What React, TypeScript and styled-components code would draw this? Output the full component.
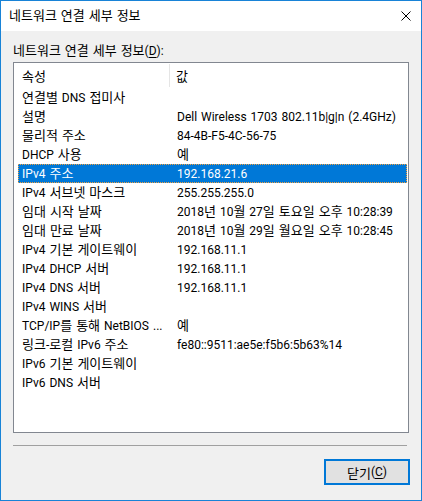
import React from "react";
import styled, { createGlobalStyle } from "styled-components";

const Global = createGlobalStyle`
  html, body { margin: 0; padding: 0; background: #ffffff; }
  * { box-sizing: border-box; }
`;

const FONT = `Roboto, "Noto Sans CJK KR", sans-serif`;

const Window = styled.div`
  width: 422px;
  height: 501px;
  border: 1px solid #1883d7;
  display: flex;
  flex-direction: column;
  font-family: ${FONT};
  font-size: 12px;
  word-spacing: 1px;
  color: #000;
  background: #f0f0f0;
`;

const Hangul = styled.span`
  font-family: "Noto Sans CJK KR", sans-serif;
  font-size: 13px;
  line-height: 1;
`;

const TitleBar = styled.div`
  height: 30px;
  flex: none;
  background: #ffffff;
  display: flex;
  align-items: center;
  justify-content: space-between;
  padding: 0 10px 0 8px;
`;

const Title = styled.span`
  line-height: 16px;
  color: #000;
`;

const CloseIcon = styled.svg`
  width: 10px;
  height: 10px;
  display: block;
`;

const Body = styled.div`
  flex: 1;
  display: flex;
  flex-direction: column;
  padding: 12px 11px 0 12px;
`;

const Label = styled.div`
  height: 19px;
  line-height: 16px;
`;

const Underline = styled.span`
  text-decoration: underline;
  text-underline-offset: 2px;
`;

const ListBox = styled.div`
  width: 396px;
  height: 371px;
  border: 1px solid #828790;
  background: #ffffff;
  display: flex;
  flex-direction: column;
`;

const Header = styled.div`
  height: 25px;
  display: grid;
  grid-template-columns: 156px 1fr;
  flex: none;
`;

const HeaderCell = styled.div<{ $first?: boolean }>`
  display: flex;
  align-items: center;
  padding-left: ${(p) => (p.$first ? "8px" : "6px")};
  border-right: ${(p) => (p.$first ? "1px solid #e5e5e5" : "none")};
  margin: 1px 0 1px;
`;

const Rows = styled.div`
  display: flex;
  flex-direction: column;
  padding: 0 1px 0 4px;
`;

const Row = styled.div<{ $selected?: boolean }>`
  height: 19px;
  display: grid;
  grid-template-columns: 152px 1fr;
  align-items: center;
  background: ${(p) => (p.$selected ? "#0078d7" : "transparent")};
  color: ${(p) => (p.$selected ? "#ffffff" : "#000000")};
  outline: ${(p) => (p.$selected ? "1px dotted #f0a040" : "none")};
  outline-offset: -1px;
`;

const Cell = styled.div<{ $value?: boolean }>`
  padding-left: ${(p) => (p.$value ? "7px" : "4px")};
  white-space: nowrap;
  line-height: 16px;
`;

const Separator = styled.div`
  margin-top: 12px;
  width: 394px;
  height: 1px;
  background: #a0a0a0;
`;

const Footer = styled.div`
  display: flex;
  justify-content: flex-end;
  padding-top: 13px;
`;

const Button = styled.button`
  width: 86px;
  height: 26px;
  border: 2px solid #0078d7;
  background: #e1e1e1;
  font-family: ${FONT};
  font-size: 12px;
  color: #000;
  padding: 0;
  display: flex;
  align-items: center;
  justify-content: center;
`;

const T = ({ s }: { s: string }) => (
  <>
    {s.split(/([\uAC00-\uD7A3\u3130-\u318F]+)/).map((part, i) =>
      i % 2 === 1 ? <Hangul key={i}>{part}</Hangul> : <React.Fragment key={i}>{part}</React.Fragment>
    )}
  </>
);

const rows: [string, string][] = [
  ["연결별 DNS 접미사", ""],
  ["설명", "Dell Wireless 1703 802.11b|g|n (2.4GHz)"],
  ["물리적 주소", "84-4B-F5-4C-56-75"],
  ["DHCP 사용", "예"],
  ["IPv4 주소", "192.168.21.6"],
  ["IPv4 서브넷 마스크", "255.255.255.0"],
  ["임대 시작 날짜", "2018년 10월 27일 토요일 오후 10:28:39"],
  ["임대 만료 날짜", "2018년 10월 29일 월요일 오후 10:28:45"],
  ["IPv4 기본 게이트웨이", "192.168.11.1"],
  ["IPv4 DHCP 서버", "192.168.11.1"],
  ["IPv4 DNS 서버", "192.168.11.1"],
  ["IPv4 WINS 서버", ""],
  ["TCP/IP를 통해 NetBIOS ...", "예"],
  ["링크-로컬 IPv6 주소", "fe80::9511:ae5e:f5b6:5b63%14"],
  ["IPv6 기본 게이트웨이", ""],
  ["IPv6 DNS 서버", ""],
];

export default function App() {
  return (
    <>
      <Global />
      <Window>
        <TitleBar>
          <Title>
            <T s="네트워크 연결 세부 정보" />
          </Title>
          <CloseIcon viewBox="0 0 10 10">
            <path d="M0.5 0.5 L9.5 9.5 M9.5 0.5 L0.5 9.5" stroke="#000" strokeWidth="1" fill="none" />
          </CloseIcon>
        </TitleBar>
        <Body>
          <Label>
            <T s="네트워크 연결 세부 정보" />(<Underline>D</Underline>):
          </Label>
          <ListBox>
            <Header>
              <HeaderCell $first>
                <T s="속성" />
              </HeaderCell>
              <HeaderCell>
                <T s="값" />
              </HeaderCell>
            </Header>
            <Rows>
              {rows.map(([k, v], i) => (
                <Row key={i} $selected={i === 4}>
                  <Cell>
                    <T s={k} />
                  </Cell>
                  <Cell $value>
                    <T s={v} />
                  </Cell>
                </Row>
              ))}
            </Rows>
          </ListBox>
          <Separator />
          <Footer>
            <Button>
              <T s="닫기" />(<Underline>C</Underline>)
            </Button>
          </Footer>
        </Body>
      </Window>
    </>
  );
}
